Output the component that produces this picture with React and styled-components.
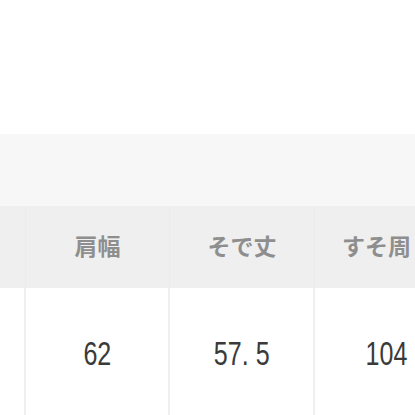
import React from "react";
import styled, { createGlobalStyle } from "styled-components";

const Global = createGlobalStyle`
  html, body { margin: 0; padding: 0; background: #fff; }
  body { width: 415px; height: 415px; overflow: hidden; }
`;

const Page = styled.div`
  width: 415px;
  height: 415px;
  overflow: hidden;
  display: flex;
  flex-direction: column;
`;

const TopSpace = styled.div`
  height: 134px;
  background: #ffffff;
  flex: none;
`;

const Band = styled.div`
  height: 72px;
  background: #f7f7f7;
  flex: none;
`;

const Row = styled.div`
  display: grid;
  grid-template-columns: 26px 144px 145px 145px;
  width: 460px;
  flex: none;
  background: ${(p) => (p.$head ? "#efefef" : "#ffffff")};
  height: ${(p) => (p.$head ? "82px" : "140px")};
`;

const Cell = styled.div`
  display: flex;
  align-items: center;
  justify-content: ${(p) => (p.$shift ? "flex-start" : "center")};
  padding-left: ${(p) => (p.$shift ? "27px" : "0")};
  border-right: ${(p) => (p.$head ? "1px solid #ebebeb" : "2px solid #efefef")};
  box-sizing: border-box;
`;

const HeadText = styled.span`
  font-family: "Noto Sans CJK JP", sans-serif;
  font-weight: 700;
  font-size: 23px;
  color: #8e8e8e;
  margin-top: -4px;
`;

const Num = styled.span`
  font-family: "Liberation Sans", sans-serif;
  font-size: 33px;
  color: #3a3a3a;
  display: inline-block;
  transform: scaleX(0.76);
  margin-top: -8px;
`;

const headers = ["", "肩幅", "そで丈", "すそ周"];
const values = ["", "62", "57. 5", "104"];

export default function App() {
  return (
    <>
      <Global />
      <Page>
        <TopSpace />
        <Band />
        <Row $head>
          {headers.map((h, i) => (
            <Cell $head $shift={i === 3} key={i}>
              {h && <HeadText>{h}</HeadText>}
            </Cell>
          ))}
        </Row>
        <Row>
          {values.map((v, i) => (
            <Cell key={i}>{v && <Num>{v}</Num>}</Cell>
          ))}
        </Row>
      </Page>
    </>
  );
}
